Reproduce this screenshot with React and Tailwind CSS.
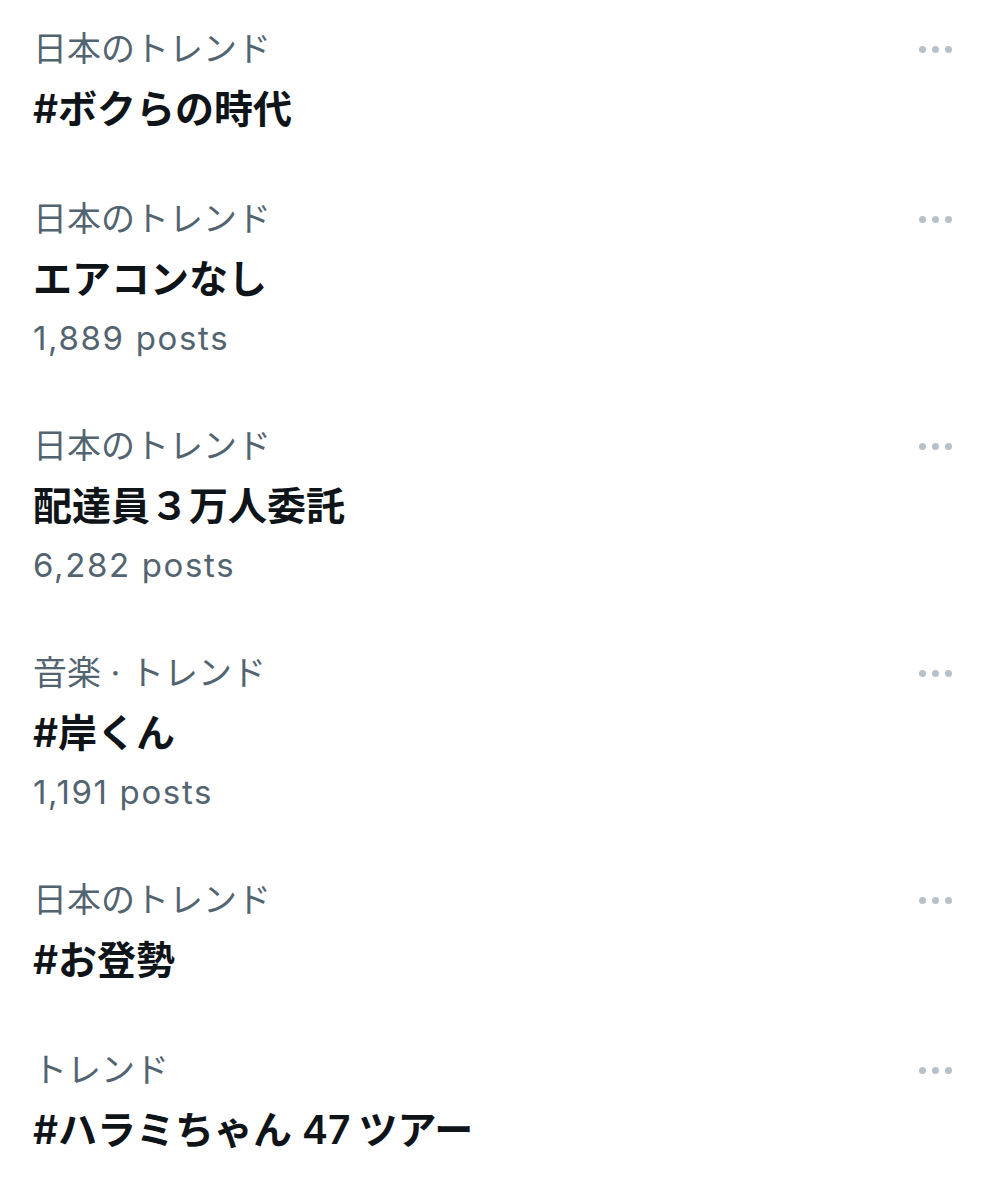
import React from "react";

const items = [
  { cat: "日本のトレンド", title: "#ボクらの時代" },
  { cat: "日本のトレンド", title: "エアコンなし", posts: "1,889 posts" },
  { cat: "日本のトレンド", title: "配達員３万人委託", posts: "6,282 posts" },
  { cat: "音楽 · トレンド", title: "#岸くん", posts: "1,191 posts" },
  { cat: "日本のトレンド", title: "#お登勢" },
  {
    cat: "トレンド",
    title: (
      <>
        #ハラミちゃん<span className="ml-[10px] mr-[8px]">47</span>ツアー
      </>
    ),
  },
];

function Dots() {
  return (
    <div className="flex items-center gap-[6px] h-[44px]">
      <span className="w-[7px] h-[7px] rounded-full bg-[#b7c1c9]" />
      <span className="w-[7px] h-[7px] rounded-full bg-[#b7c1c9]" />
      <span className="w-[7px] h-[7px] rounded-full bg-[#b7c1c9]" />
    </div>
  );
}

export default function App() {
  return (
    <div
      className="w-[990px] h-[1200px] bg-white overflow-hidden"
      style={{ fontFamily: 'Inter, "Noto Sans CJK JP", "Noto Sans", sans-serif' }}
    >
      {items.map((it, i) => (
        <div key={i} className="pl-[33px] pr-[38px] pt-[27px] pb-[33px]">
          <div className="flex justify-between items-start">
            <div className="text-[34px] leading-[44px] text-[#536471]">{it.cat}</div>
            <Dots />
          </div>
          <div className="mt-[10px] text-[39px] leading-[56px] font-semibold text-[#0f1419]">
            {it.title}
          </div>
          {it.posts && (
            <div className="mt-[9px] mb-[4px] text-[33px] leading-[44px] tracking-[0.05em] text-[#536471]">
              {it.posts}
            </div>
          )}
        </div>
      ))}
    </div>
  );
}
